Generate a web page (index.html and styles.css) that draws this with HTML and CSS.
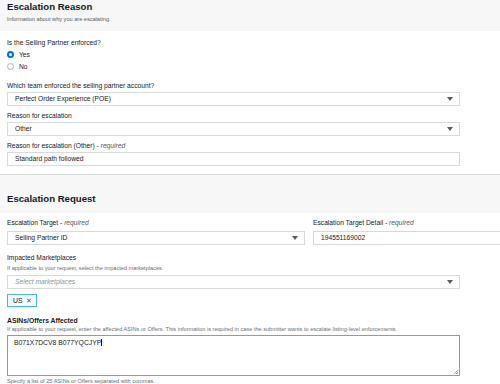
FILE: index.html
```html
<!DOCTYPE html>
<html>
<head>
<meta charset="utf-8" />
<title>Escalation</title>
<link rel="stylesheet" href="styles.css">
</head>
<body>
<div class="page">
	<div class="section">
		<div class="section-head">
			<h2>Escalation Reason</h2>
			<p>Information about why you are escalating.</p>
		</div>
		<div class="section-body">
			<div class="field field-radio">
				<div class="label">Is the Selling Partner enforced?</div>
				<div class="radio"><span class="dot on"></span>Yes</div>
				<div class="radio"><span class="dot"></span>No</div>
			</div>
			<div class="field">
				<div class="label">Which team enforced the selling partner account?</div>
				<div class="select">Perfect Order Experience (POE)<span class="caret-down"></span></div>
			</div>
			<div class="field">
				<div class="label">Reason for escalation</div>
				<div class="select">Other<span class="caret-down"></span></div>
			</div>
			<div class="field">
				<div class="label">Reason for escalation (Other) - <i>required</i></div>
				<div class="input">Standard path followed</div>
			</div>
		</div>
	</div>

	<div class="section section-second">
		<div class="section-head">
			<h2>Escalation Request</h2>
		</div>
		<div class="section-body">
			<div class="row">
				<div class="field">
					<div class="label">Escalation Target - <i>required</i></div>
					<div class="select">Selling Partner ID<span class="caret-down"></span></div>
				</div>
				<div class="field">
					<div class="label">Escalation Target Detail - <i>required</i></div>
					<div class="input">194551169002</div>
				</div>
			</div>
			<div class="field">
				<div class="label">Impacted Marketplaces</div>
				<div class="hint">If applicable to your request, select the impacted marketplaces.</div>
				<div class="select placeholder">Select marketplaces<span class="caret-down"></span></div>
				<div class="tags"><span class="tag">US <span class="x">&#x2715;</span></span></div>
			</div>
			<div class="field">
				<div class="label strong">ASINs/Offers Affected</div>
				<div class="hint">If applicable to your request, enter the affected ASINs or Offers. This information is required in case the submitter wants to escalate listing-level enforcements.</div>
				<div class="textarea">B071X7DCV8 B077YQCJYP<span class="cursor"></span></div>
				<div class="hint foot">Specify a list of 25 ASINs or Offers separated with commas.</div>
			</div>
		</div>
	</div>
</div>
</body>
</html>
```

FILE: styles.css
```css
*{margin:0;padding:0;box-sizing:border-box;}
body{font-family:"Liberation Sans",Arial,sans-serif;color:#16191f;background:#fff;overflow:hidden;}
.page{width:560px;}
.section{background:#fff;border-bottom:1px solid #d5dbdb;}
.section-head{background:#f7f7f7;padding:2px 7px 8px;}
.section-head h2{font-size:9.6px;line-height:10px;font-weight:bold;color:#16191f;}
.section-head p{font-size:5.6px;line-height:8px;margin-top:3px;color:#545b64;}
.section-body{padding:8px 7px 8px;}
.section-second{border-bottom:none;}
.section-second .section-head{padding:18px 7px 9px;}
.section-second .section-head h2{line-height:11px;}
.section-second .section-body{padding-top:6px;}

.field{margin-bottom:6px;width:453px;}
.field:last-child{margin-bottom:0;}
.field-radio{margin-bottom:10px;}
.field-radio .label{margin-bottom:1px;}
.label{font-size:6.7px;line-height:8px;color:#16191f;margin-bottom:2px;white-space:nowrap;}
.label i{color:#545b64;}
.label.strong{font-weight:bold;font-size:6.8px;margin-bottom:0;}
.hint{font-size:5.6px;line-height:8px;color:#687078;white-space:nowrap;}
.hint.foot{margin-top:1px;}

.radio{display:flex;align-items:center;height:12px;font-size:6.7px;}
.dot{width:7px;height:7px;border-radius:50%;border:1px solid #aab7b8;margin-right:5px;background:#fff;}
.dot.on{border:2px solid #0073bb;}

.select,.input{height:14px;border:1px solid #d5dbdb;background:#fff;font-size:6.7px;line-height:12px;padding:0 7px;position:relative;color:#16191f;}
.select.placeholder{color:#879596;font-style:italic;margin-top:3px;}
.caret-down{position:absolute;right:6px;top:4px;width:0;height:0;border-left:3px solid transparent;border-right:3px solid transparent;border-top:4px solid #545b64;}

.row{display:grid;grid-template-columns:298px 200px;column-gap:8px;width:560px;margin-bottom:9px;}
.row .field{width:auto;margin-bottom:0;}
.row .field .label{margin-bottom:4px;}

.tags{display:flex;padding:5px 0 4px;}
.tag{display:flex;align-items:center;height:13px;padding:0 4px 0 5px;background:#f1faff;border:1px solid #44b9d6;font-size:6.8px;color:#16191f;}
.tag .x{margin-left:4px;font-size:7px;color:#545b64;}

.textarea{height:41px;border:1.5px solid #44b9d6;font-size:6.8px;line-height:10px;padding:2px 6px;position:relative;margin-top:2px;}
.cursor{display:inline-block;width:1px;height:7px;background:#16191f;vertical-align:-1px;}
.textarea:after{content:"";position:absolute;right:1px;bottom:1px;width:6px;height:6px;background:repeating-linear-gradient(135deg,transparent 0 1px,#aaa 1px 2px);clip-path:polygon(100% 0,100% 100%,0 100%);}
```
